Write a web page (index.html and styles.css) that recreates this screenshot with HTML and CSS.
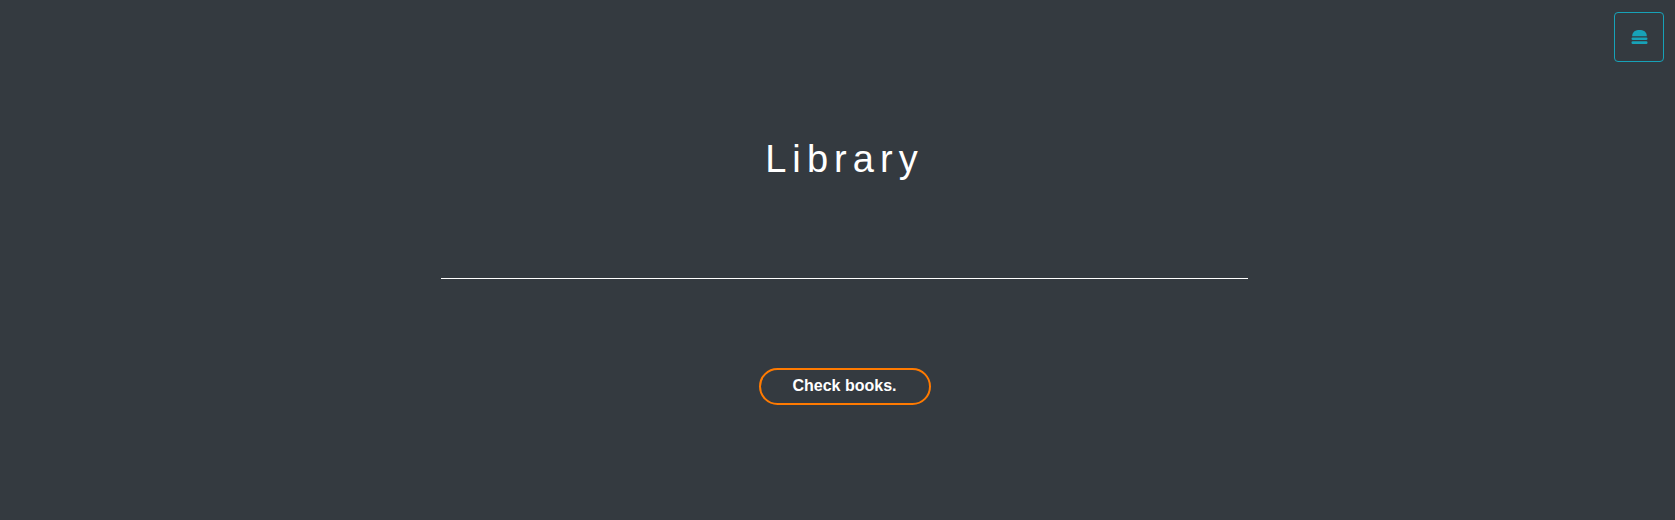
FILE: index.html
```html
<!DOCTYPE html>
<html lang="en">
<head>
<meta charset="utf-8">
<title>Library</title>
<link rel="stylesheet" href="styles.css">
</head>
<body>
<button class="menu-btn" aria-label="Menu">
  <svg width="17" height="14" viewBox="0 0 17 14">
    <path d="M1.2 6.2 C1.2 1.6 4.8 0 8.5 0 C12.2 0 15.8 1.6 15.8 6.2 Z" fill="#17a2b8"/>
    <rect x="0.5" y="7.6" width="16" height="2.3" rx="1.1" fill="#17a2b8"/>
    <rect x="0.5" y="11.3" width="16" height="2.6" rx="1.2" fill="#17a2b8"/>
  </svg>
</button>
<main class="main">
  <h1 class="title">Library</h1>
  <hr class="divider">
  <button class="check-btn">Check books.</button>
</main>
</body>
</html>
```
FILE: styles.css
```css
html, body {
  margin: 0;
  padding: 0;
  background: #343a40;
  height: 100%;
}
body {
  font-family: "Liberation Sans", Arial, sans-serif;
  color: #fff;
  overflow: hidden;
}
.menu-btn {
  position: absolute;
  top: 12px;
  right: 11px;
  width: 50px;
  height: 50px;
  box-sizing: border-box;
  background: transparent;
  border: 1px solid #17a2b8;
  border-radius: 4px;
  display: flex;
  align-items: center;
  justify-content: center;
  padding: 0;
}
.main {
  display: flex;
  flex-direction: column;
  align-items: center;
  padding-left: 14px;
}
.title {
  margin: 137px 0 0 0;
  font-size: 38px;
  line-height: 1.2;
  font-weight: 400;
  letter-spacing: 0.16em;
}
.divider {
  width: 807px;
  margin: 95px 0 0 0;
  border: 0;
  height: 1px;
  background: #fff;
}
.check-btn {
  margin-top: 89px;
  width: 172px;
  height: 37px;
  box-sizing: border-box;
  background: transparent;
  border: 2px solid #ff7a00;
  border-radius: 19px;
  color: #fff;
  font-family: "Liberation Sans", Arial, sans-serif;
  font-size: 16px;
  font-weight: 700;
  padding: 0;
}
```
